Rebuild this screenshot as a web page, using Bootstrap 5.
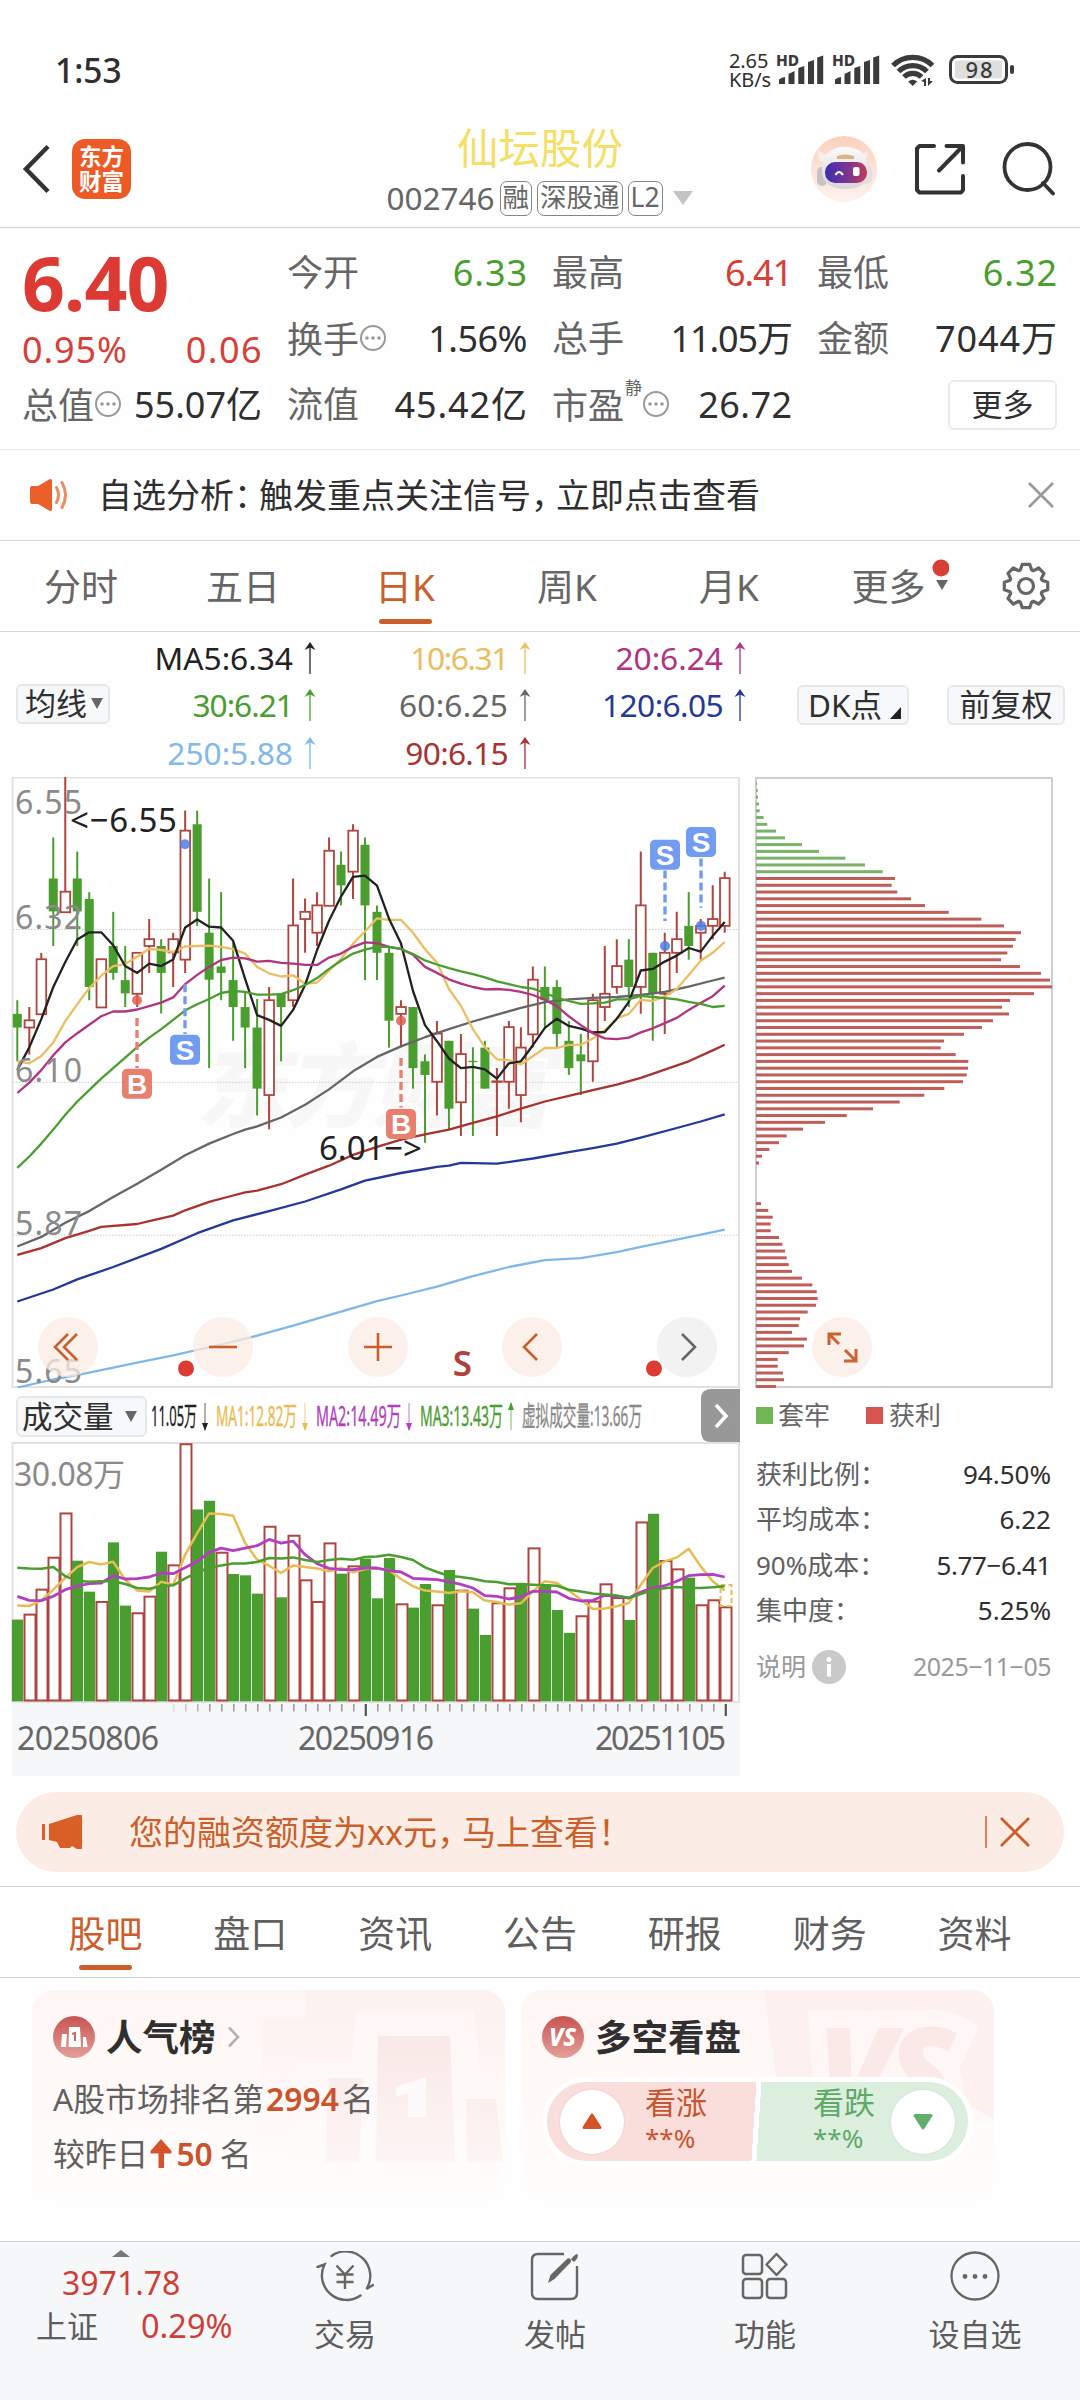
<!DOCTYPE html>
<html lang="zh-CN">
<head>
<meta charset="utf-8">
<meta name="viewport" content="width=device-width, initial-scale=1">
<title>仙坛股份 002746</title>
<link href="https://cdn.jsdelivr.net/npm/bootstrap@5.3.0/dist/css/bootstrap.min.css" rel="stylesheet">
<style>
:root{--up:#d83f39;--dn:#4a9d2f;--acc:#cb5f2b;--ln:#d9d9d9;--g6:#666}
body{font-family:"Noto Sans","Noto Sans CJK SC",sans-serif;color:#2f2f2f;background:#fefefe;width:1080px;height:2400px;overflow:hidden;line-height:1}
svg{display:block;flex:none}
svg text{font-family:"Noto Sans","Noto Sans CJK SC",sans-serif}
.statusbar{height:110px;padding:30px 46px 0 55px}
.clock{font-size:33.5px;font-weight:500;line-height:80px}
.speed{font-size:20px;line-height:19px;padding-top:21px;width:43px;margin-left:-1px;letter-spacing:-.1px}
.apphead{height:118px;border-bottom:1px solid #d0d0d0;padding:0 24px 0 22px}
.side-l{width:300px;padding-top:1px}.side-r{width:298px;gap:33px}
.logo-em{width:59px;height:60px;border-radius:13px;background:#ec5a26;color:#fff;font-size:22.5px;line-height:25px;font-weight:600;margin-left:22px}
.stock-name{font-size:41.5px;line-height:48px;color:#f4df67;margin-top:14px}
.stock-sub{font-size:31.500px;line-height:36px;color:var(--g6);gap:5px}
.tagbox{border:1.5px solid #858585;border-radius:7px;height:35px;line-height:31px;font-size:26.500px;padding:0 2px}
.quote{height:222px;border-bottom:1px solid #e8e8e8;padding:0 23px 0 22px;font-size:36px;gap:25px}
.qcol{flex:1 1 0;padding-top:12px}
.qline{height:66px;line-height:65px;white-space:nowrap}
.lbl{color:var(--g6);font-size:36px}
.upc{color:var(--up)}.dnc{color:var(--dn)}
.wide{letter-spacing:.9px;margin-right:-.9px}.tight{letter-spacing:-1.1px}
.bigprice{font-size:75px;font-weight:700;letter-spacing:-.8px;line-height:85px;height:88px;color:#dd3a33}
.morebtn{width:109px;height:50px;border:2px solid #ebebeb;border-radius:6px;font-size:31px;line-height:44px}
.notice{height:91px;border-bottom:1px solid #d4d4d4;padding:0 26px 0 28px;font-size:34px}
.pn{margin-right:-9px}
.ktabs{height:91px;border-bottom:1px solid #d4d4d4;font-size:37px;color:var(--g6)}
.ktab{width:162px;line-height:92px;position:relative;text-align:center}
.on{color:var(--acc)}
.on::after{content:"";position:absolute;left:50%;margin-left:-26px;width:53px;height:5.5px;border-radius:3px;background:var(--acc);bottom:7px}
.malegend{height:145px;font-size:31.7px}
.chipbtn{background:#f7f8fa;border:2px solid #e6e7ea;border-radius:6px;height:40px;line-height:35px;font-size:31px;white-space:nowrap}
.magrid{width:645px;margin-left:-9px;padding-top:3px}
.magrid>div{width:215px;height:46.5px;line-height:46px}
.tri-dn{width:0;height:0;border-left:6px solid transparent;border-right:6px solid transparent;border-top:11px solid #666}
.charts{height:1000px}
.leftcol{width:743px;padding-left:11px}
.rightcol{padding-left:12px;width:310px}
.volhead{height:54px;padding-left:5px}
.chipinfo{font-size:26px}
.legendrow{height:54px;line-height:54px;color:var(--g6)}
.sq{width:17px;height:17px;display:inline-block}
.inforow{height:45.4px;line-height:45.4px}
.banner{margin:15px 16px 0;height:80px;border-radius:40px;background:#fbede5;color:var(--acc);font-size:34px;padding:0 33px 0 26px}
.btabs{margin-top:14px;border-top:1px solid #d4d4d4;border-bottom:1px solid #d4d4d4;height:92px;padding:0 33px;font-size:37px;color:#5f5f5f}
.btab{flex:1;position:relative;text-align:center;line-height:93px}
.promos{padding:12px 32px 0;gap:16px;height:263px}
.promo{width:473px;height:211px;border-radius:22px;background:linear-gradient(180deg,#fef6f4,#fffdfc);position:relative;overflow:hidden;padding:26px 21px}
.promo>.deco{position:absolute;left:0;top:0}
.promo>.front{position:relative}
.ptitle{font-size:36.5px;font-weight:700;height:42px;line-height:42px;gap:11px}
.pline{font-size:31.8px;color:#606060;height:55px;line-height:55px;white-space:nowrap}
.hot{color:#ca532c;font-weight:600}
.duel{width:431px;height:89px;border-radius:45px;border:5px solid #fff;margin:19px 0 0 0;background:linear-gradient(93.6deg,#f9dedb 0 209px,#fff 209px 214px,#dceede 214px);padding:0 12px 0 13px}
.rnd{width:64px;height:64px;border-radius:50%;background:#fff;box-shadow:0 0 3px rgba(0,0,0,.08)}
.duel .t1{font-size:31px;line-height:38px;margin-top:-5px}.duel .t2{font-size:26px;line-height:34px}
.tabbar{height:160px;border-top:1px solid #cfd2d4;background:#f6f7f9;color:#5d5d5d;font-size:31px}
.tabbar .cell{width:210px;padding-top:9px;text-align:center}
.cell div{line-height:42px;margin-top:10px}
.idx{width:240px}
</style>
</head>
<body>
<header>
<div class="statusbar d-flex justify-content-between">
  <div class="clock">1:53</div>
  <div class="d-flex">
    <div class="speed">2.65<br>KB/s</div>
    <svg width="262" height="50" viewBox="772 50 262 50" style="margin-top:20px" fill="#3b3b3b">
      <g id="sig"><text x="776" y="66" font-size="15.5" font-weight="800" textLength="23">HD</text>
      <path d="M779 84v-4.500q3-2.500 6-2.500v7zM788.500 84V74l6-3v13zM798.300 84V68l6-2v18zM808 84V62l6-2v24zM817.200 84V57.500l6-2V84z"/></g>
      <use href="#sig" x="56"/>
      <g fill="none" stroke="#3b3b3b" stroke-width="5.200"><path d="M893 65.500A28 28 0 0 1 932.500 65.500"/><path d="M898.500 71.500A20 20 0 0 1 927 71.500"/><path d="M904 77A12.500 12.500 0 0 1 921.500 77"/></g>
      <path d="M912.700 86l-4.500-4.500q4.500-3.500 9 0zM921 81l5-3v8h-2v-4zM933 81l-5 5v-8h2v3z"/>
      <rect x="950.500" y="56.500" width="56" height="26" rx="7" fill="none" stroke="#3b3b3b" stroke-width="3"/>
      <rect x="955" y="60.500" width="47" height="18" rx="3" fill="#dedede"/>
      <text x="965.500" y="77.500" font-size="22" font-weight="500" textLength="27">98</text>
      <rect x="1010" y="65" width="4" height="9" rx="2"/>
    </svg>
  </div>
</div>
<div class="apphead d-flex justify-content-between">
  <div class="side-l d-flex align-items-center">
    <svg width="28" height="52" viewBox="0 0 28 52"><path d="M26 3.500 4 26 26 48.500" fill="none" stroke="#333" stroke-width="4.500"/></svg>
    <div class="logo-em d-flex flex-column align-items-center justify-content-center"><span>东方</span><span>财富</span></div>
  </div>
  <div class="text-center">
    <div class="stock-name">仙坛股份</div>
    <div class="stock-sub d-flex align-items-center justify-content-center mt-2"><span>002746</span><span class="tagbox">融</span><span class="tagbox">深股通</span><span class="tagbox">L2</span>
      <svg width="22" height="14" viewBox="0 0 22 14" class="ms-1"><path d="M1 0h20L11 14z" fill="#c4c4c4"/></svg></div>
  </div>
  <div class="side-r d-flex align-items-center justify-content-end">
    <svg width="68" height="68" viewBox="0 0 68 68" class="me-1">
      <defs><linearGradient id="rb" x2="0" y2="1"><stop stop-color="#fad1bd"/><stop offset="1" stop-color="#fdf3ef"/></linearGradient><linearGradient id="vs"><stop stop-color="#3b2fb0"/><stop offset=".55" stop-color="#7c3590"/><stop offset="1" stop-color="#c43a55"/></linearGradient><linearGradient id="hd" x2="0" y2="1"><stop stop-color="#fcfafa"/><stop offset="1" stop-color="#dad4d9"/></linearGradient></defs>
      <circle cx="34" cy="34" r="33" fill="url(#rb)"/>
      <path d="M9 14q2 7 11 5L14 28Q6 24 9 14zM57 14q-2 7-10 5l5 8q7-3 5-13z" fill="#f3efed"/>
      <rect x="7" y="32" width="10" height="19" rx="5" fill="#c6c2c6"/><rect x="51" y="31" width="11" height="18" rx="5" fill="#e3dfe2"/>
      <path d="M12 34Q13 12 35 12T58 34Q60 53 37 54 11 54 12 34z" fill="url(#hd)"/>
      <path d="M27 21q8-3 17 0v3H27z" fill="#ddb184"/>
      <rect x="15" y="27" width="42" height="21" rx="10" fill="url(#vs)"/>
      <path d="M25.500 40q3.500-6 7.500 0" fill="none" stroke="#fff" stroke-width="2.200"/><rect x="43" y="32" width="6.500" height="9" rx="2" fill="#fff"/>
    </svg>
    <svg width="50" height="52" viewBox="912 143 50 52" fill="none" stroke="#333" stroke-width="4" stroke-linecap="round" stroke-linejoin="round"><path d="M931 146h-14.500l-2.500 2.500v41.500l2.500 2.500h41.500l2-2.500v-14M943.500 146H960v16.500M959 147l-23 23.500"/></svg>
    <svg width="54" height="54" viewBox="1001 141 54 54" fill="none" stroke="#333" stroke-width="3.800" stroke-linecap="round" class="ms-1"><circle cx="1026.500" cy="166" r="23"/><path d="M1042 182l10 10.500"/></svg>
  </div>
</div>
</header>

<section class="quote d-flex">
  <div class="qcol">
    <div class="bigprice">6.40</div>
    <div class="d-flex justify-content-between upc" style="height:44px;line-height:44px"><span class="wide">0.95%</span><span class="wide" style="letter-spacing:1.4px">0.06</span></div>
    <div class="qline d-flex justify-content-between"><span class="lbl d-flex align-items-center">总值<svg class="dots" width="28" height="28" viewBox="0 0 28 28"><use href="#dd"/></svg></span><span>55.07亿</span></div>
  </div>
  <div class="qcol">
    <div class="qline d-flex justify-content-between"><span class="lbl">今开</span><span class="dnc wide">6.33</span></div>
    <div class="qline d-flex justify-content-between"><span class="lbl d-flex align-items-center">换手<svg width="28" height="28" viewBox="0 0 28 28"><g id="dd" fill="#999"><circle cx="14" cy="13" r="12" fill="none" stroke="#999" stroke-width="2"/><circle cx="8" cy="13" r="1.800"/><circle cx="14" cy="13" r="1.800"/><circle cx="20" cy="13" r="1.800"/></g></svg></span><span style="letter-spacing:-.5px">1.56%</span></div>
    <div class="qline d-flex justify-content-between"><span class="lbl">流值</span><span class="wide">45.42亿</span></div>
  </div>
  <div class="qcol">
    <div class="qline d-flex justify-content-between"><span class="lbl">最高</span><span class="upc tight">6.41</span></div>
    <div class="qline d-flex justify-content-between"><span class="lbl">总手</span><span class="tight">11.05万</span></div>
    <div class="qline d-flex justify-content-between"><span class="lbl d-flex align-items-center">市盈<span style="font-size:17px;line-height:20px;margin:-34px 0 0 1px">静</span><svg width="28" height="28" viewBox="0 0 28 28"><use href="#dd"/></svg></span><span class="wide" style="letter-spacing:.4px;margin-right:-.4px">26.72</span></div>
  </div>
  <div class="qcol">
    <div class="qline d-flex justify-content-between"><span class="lbl">最低</span><span class="dnc wide">6.32</span></div>
    <div class="qline d-flex justify-content-between"><span class="lbl">金额</span><span class="wide">7044万</span></div>
    <div class="qline d-flex justify-content-end align-items-center"><div class="morebtn text-center">更多</div></div>
  </div>
</section>

<section class="notice d-flex align-items-center">
  <svg width="42" height="34" viewBox="0 0 42 34"><path d="M2 10q0-2 2-2h6L21 1.500q3-1.500 3 1.500v28q0 3-3 1.500L10 26H4q-2 0-2-2z" fill="#ea5f2a"/><path d="M28.500 9.500q4 7.500 0 15M34 4.500q7 12.500 0 25" fill="none" stroke="#ef8a61" stroke-width="3" stroke-linecap="round"/></svg>
  <div class="flex-fill" style="padding-left:28px">自选分析<span class="pn">：</span>触发重点关注信号<span class="pn">，</span>立即点击查看</div>
  <svg width="26" height="26" viewBox="0 0 26 26"><path d="M1 1l24 24M25 1 1 25" stroke="#999" stroke-width="2.600"/></svg>
</section>

<nav class="ktabs d-flex">
  <div class="ktab">分时</div><div class="ktab">五日</div><div class="ktab on">日K</div><div class="ktab">周K</div><div class="ktab">月K</div>
  <div class="ktab d-flex justify-content-center"><span class="ms-1">更多</span><svg width="18" height="60" viewBox="0 0 18 60" style="margin:10px -14px 0 5px"><circle cx="10" cy="17" r="8.500" fill="var(--up)"/><path d="M5 29h12l-6 10z" fill="#666"/></svg></div>
  <div class="flex-fill d-flex align-items-center justify-content-center">
    <svg width="48" height="48" viewBox="-24 -24 48 48" fill="none" stroke="#666" stroke-width="3.200" stroke-linejoin="round"><path id="gear" d=""/><circle r="7.500"/></svg>
  </div>
</nav>

<section class="malegend d-flex">
  <div class="d-flex align-items-center" style="padding:0 0 2px 16px"><div class="chipbtn d-flex align-items-center" style="width:94px;padding-left:7px">均线<span class="tri-dn ms-1"></span></div></div>
  <div class="magrid d-flex flex-wrap" id="ma"></div>
  <div class="d-flex align-items-center flex-fill justify-content-between" style="padding:1px 15px 0 51px">
    <div class="chipbtn d-flex" style="width:112px;padding-left:9px;font-size:31.500px">DK点<svg width="11" height="12" viewBox="0 0 11 12" class="align-self-end mb-1 ms-2"><path d="M11 0v12H0z" fill="#222"/></svg></div>
    <div class="chipbtn text-center" style="width:118px">前复权</div>
  </div>
</section>

<section class="charts d-flex">
  <div class="leftcol">
    <svg id="kchart" width="729" height="611" viewBox="11 777 729 611"></svg>
    <div class="volhead d-flex">
      <div class="chipbtn d-flex align-items-center mt-2" style="width:131px;height:41px;padding-left:4px;font-size:30.500px">成交量<span class="tri-dn" style="margin-left:11px"></span></div>
      <svg width="593" height="54" viewBox="147 1388 593 54" id="volinfo"></svg>
    </div>
    <svg id="vchart" width="729" height="334" viewBox="11 1442 729 334"></svg>
  </div>
  <div class="rightcol">
    <svg id="chips" width="300" height="611" viewBox="755 777 300 611"></svg>
    <div class="chipinfo" style="padding:0 1px;width:297px">
      <div class="legendrow d-flex align-items-center"><span class="sq" style="background:#72b554"></span><span style="margin:0 36px 0 5px">套牢</span><span class="sq" style="background:#d6534f"></span><span style="margin-left:6px">获利</span></div>
      <div style="height:10px"></div>
      <div class="inforow d-flex justify-content-between"><span style="color:#606060">获利比例：</span><span>94.50%</span></div>
      <div class="inforow d-flex justify-content-between"><span style="color:#606060">平均成本：</span><span>6.22</span></div>
      <div class="inforow d-flex justify-content-between"><span style="color:#606060">90%成本：</span><span style="letter-spacing:-.4px">5.77−6.41</span></div>
      <div class="inforow d-flex justify-content-between"><span style="color:#606060">集中度：</span><span>5.25%</span></div>
      <div class="d-flex justify-content-between align-items-center" style="height:66px;color:#999;font-size:25px"><span class="d-flex align-items-center">说明<svg width="34" height="34" viewBox="0 0 34 34" style="margin-left:6px"><circle cx="17" cy="17" r="17" fill="#c9c9c9"/><circle cx="17" cy="9.500" r="2.500" fill="#fff"/><path d="M17 14v12.500" stroke="#fff" stroke-width="4"/></svg></span><span style="letter-spacing:-.5px">2025−11−05</span></div>
    </div>
  </div>
</section>

<section class="banner d-flex align-items-center">
  <svg width="42" height="36" viewBox="0 0 42 36" fill="#d95f27"><path d="M0 10h3v16H0zM7 10 35 1h5v34h-5l-5-3-2 2h-10l-3-6-8-2z"/></svg>
  <div class="flex-fill" style="padding-left:45px">您的融资额度为xx元<span class="pn">，</span>马上查看！</div>
  <svg width="46" height="34" viewBox="0 0 46 34" stroke="#cb5f2b" fill="none"><path d="M1 1v32" stroke-width="1.500"/><path d="M16 3l28 28M44 3 16 31" stroke-width="2.800"/></svg>
</section>

<nav class="btabs d-flex">
  <div class="btab on">股吧</div><div class="btab">盘口</div><div class="btab">资讯</div><div class="btab">公告</div><div class="btab">研报</div><div class="btab">财务</div><div class="btab">资料</div>
</nav>

<section class="promos d-flex">
  <div class="promo">
    <svg class="deco" width="473" height="211" viewBox="0 0 473 211">
      <defs><linearGradient id="fd" x2="0" y2="1"><stop stop-color="#f8e5e3"/><stop offset="1" stop-color="#fcf4f2"/></linearGradient><linearGradient id="fe" x2="0" y2="1"><stop stop-color="#fcf1ef"/><stop offset="1" stop-color="#fffcfa"/></linearGradient></defs>
      <path d="M274 0h199v172H456L442 21H324L320 72H264L256 172H222L232 27h42z" fill="url(#fe)"/>
      <path d="M346 46h72l5 126h-79zM297 88h34l-4 84h-34zM434 109h30l7 63h-36z" fill="url(#fd)" opacity=".8"/>
      <path d="M364 97l30-10v40h-18V103l-12 3z" fill="#fffafa"/>
    </svg>
    <div class="front">
      <div class="ptitle d-flex align-items-center">
        <svg width="42" height="42" viewBox="0 0 42 42"><defs><linearGradient id="ig" x2="0" y2="1"><stop stop-color="#c85350"/><stop offset="1" stop-color="#e4a09b"/></linearGradient></defs><circle cx="21" cy="21" r="21" fill="url(#ig)"/><path d="M9 18h5l-1 13H8zM16 11h11l1 20H15.500zM30 21h3l1.500 10H30z" fill="#fff"/><path d="M19 18l3-1v8" fill="none" stroke="#cf6a66" stroke-width="2"/></svg>
        <span>人气榜</span>
        <svg width="13" height="22" viewBox="0 0 13 22"><path d="M2 1.500l9 9.500-9 9.500" fill="none" stroke="#b2b2b2" stroke-width="2.600"/></svg>
      </div>
      <div class="pline" style="margin-top:13px">A股市场排名第<span class="hot" style="margin:0 3px 0 2px">2994</span>名</div>
      <div class="pline d-flex align-items-center">较昨日<svg width="22" height="30" viewBox="0 0 22 30" style="margin:0 4px 0 2px"><path d="M11 0 21.500 12v2.500H14V29H8.500V14.500H.5V12z" fill="#d4532b"/></svg><span class="hot" style="margin-right:7px">50</span>名</div>
    </div>
  </div>
  <div class="promo">
    <svg class="deco" width="473" height="211" viewBox="0 0 473 211">
      <path d="M243 0H473V130L440 110 256 95z" fill="#fcf1ef"/>
      <text x="296" y="128" font-size="126" font-weight="900" font-style="italic" letter-spacing="-8" fill="#fae9e7" stroke="#fef7f5" stroke-width="34" paint-order="stroke">VS</text>
    </svg>
    <div class="front">
      <div class="ptitle d-flex align-items-center">
        <svg width="42" height="42" viewBox="0 0 42 42"><circle cx="21" cy="21" r="21" fill="url(#ig)"/><text x="7" y="30" font-size="25" font-weight="800" font-style="italic" fill="#fff" textLength="27" lengthAdjust="spacingAndGlyphs">VS</text></svg>
        <span>多空看盘</span>
      </div>
      <div class="duel d-flex align-items-center">
        <div class="rnd d-flex align-items-center justify-content-center"><svg width="20" height="17" viewBox="0 0 20 17"><path d="M10 2 18 14.500H2z" fill="#d4532b" stroke="#d4532b" stroke-width="3" stroke-linejoin="round"/></svg></div>
        <div style="color:#c95430;margin-left:21px;width:168px"><div class="t1">看涨</div><div class="t2">**%</div></div>
        <div style="color:#5fa968;width:78px"><div class="t1">看跌</div><div class="t2">**%</div></div>
        <div class="rnd d-flex align-items-center justify-content-center"><svg width="20" height="17" viewBox="0 0 20 17"><path d="M10 15 18 2.500H2z" fill="#62ae6b" stroke="#62ae6b" stroke-width="3" stroke-linejoin="round"/></svg></div>
      </div>
    </div>
  </div>
</section>

<nav class="tabbar d-flex">
  <div class="idx" style="padding-top:8px">
    <svg width="18" height="7" viewBox="0 0 18 7" style="margin-left:112px"><path d="M0 7 9 0l9 7z" fill="#777"/></svg>
    <div style="margin:5px 0 0 62px;font-size:32px;line-height:42px;color:#cf3f3a">3971.78</div>
    <div class="d-flex" style="padding-left:36px;line-height:44px"><span>上证</span><span style="color:#cf3f3a;margin-left:43px;font-size:32.500px">0.29%</span></div>
  </div>
  <div class="cell"><svg class="mx-auto" width="58" height="52" viewBox="317 2251 58 52" fill="none" stroke="#666" stroke-width="2.400" stroke-linecap="round"><path d="M332.500 2256A24.500 24.500 0 0 1 367.500 2289l6.500-4M361.500 2295.500A24.500 24.500 0 0 1 325.500 2264.500l-7 2.500"/><path d="M337.500 2265.500l8.500 9 8.500-9M346 2274.500V2289M337.500 2274.500h17M337.500 2282h17" stroke-linecap="butt"/></svg><div>交易</div></div>
  <div class="cell"><svg class="mx-auto" width="50" height="52" viewBox="531 2251 50 52" fill="none" stroke="#666" stroke-width="2.400"><path d="M565 2254H539q-6 0-6 6v33q0 6 6 6h33q6 0 6-6v-27"/><path d="M549 2283l2.500-8 17-16.500q3.500-1.500 3.500 3.500l-16.500 17z" fill="#666" stroke="none"/><path d="M572 2259.500q3-5 6.500-5.500 1.500 3.500-3.500 8z" fill="#666" stroke="none"/></svg><div>发帖</div></div>
  <div class="cell"><svg class="mx-auto" width="50" height="52" viewBox="0 1 50 52" fill="none" stroke="#666" stroke-width="2.500" stroke-linejoin="round"><rect x="3" y="5" width="19" height="19" rx="3"/><rect x="3" y="29" width="19" height="19" rx="3"/><rect x="27" y="29" width="19" height="19" rx="3"/><path d="M36.500 4 46.500 14.500 36.500 25 26.500 14.500z"/></svg><div>功能</div></div>
  <div class="cell"><svg class="mx-auto" width="52" height="52" viewBox="0 1 52 52"><circle cx="26" cy="26" r="23.500" fill="none" stroke="#666" stroke-width="2.300"/><g fill="#666"><circle cx="16" cy="26.500" r="2.400"/><circle cx="26" cy="26.500" r="2.400"/><circle cx="36" cy="26.500" r="2.400"/></g></svg><div>设自选</div></div>
</nav>

<script src="https://cdn.jsdelivr.net/npm/bootstrap@5.3.0/dist/js/bootstrap.bundle.min.js"></script>
<script>
const RED='#b0453f', GRN='#4a9d2f';
const $=id=>document.getElementById(id);

// settings gear outline: eight teeth
(function(){let p=[];for(let k=0;k<8;k++){const a=k*Math.PI/4-Math.PI/2;[[-.34,17],[-.17,22],[.17,22],[.34,17]].forEach(([d,r])=>p.push((r*Math.cos(a+d)).toFixed(1)+' '+(r*Math.sin(a+d)).toFixed(1)));}
$('gear').setAttribute('d','M'+p.join('L')+'Z');})();

// moving average legend: text, colour, tracking
const up=c=>`<svg width="12" height="32" viewBox="0 0 12 32" style="margin:7px 0 0 11px"><path d="M6 1v31" stroke="${c}" stroke-width="1.300" fill="none"/><path d="M6 0 11.500 8 6 5.500 .5 8z" fill="${c}"/></svg>`;
$('ma').innerHTML=[['MA5:6.34','#222',0],['10:6.31','#e9bd60',-1.4],['20:6.24','#b0347f',0],['30:6.21','#4a9d2f',-1],['60:6.25','#666',.2],['120:6.05','#26379a',-.6],['250:5.88','#82b9e8',0],['90:6.15','#a83230',-.7]]
 .map(([t,c,s])=>`<div class="d-flex justify-content-end" style="color:${c};letter-spacing:${s}px">${t}${up(c)}</div>`).join('');

// candles: kind, high, body top, body bottom, low
const K=`G573,607,641,725 R590,623,641,708 R455,471,608,608 G168,270,352,438 R17,303,354,354 G203,270,352,438 G304,321,540,573 R471,471,591,591 G353,438,505,522 G438,523,556,590 R455,455,557,590 R371,421,438,505 G421,438,505,606 R405,421,454,540 R101,151,472,505 G101,135,353,388 G270,405,522,742 G304,489,505,573 G430,523,590,674 G555,590,641,742 G570,641,793,860 R540,573,809,894 G556,556,590,725 R270,387,573,590 R320,353,371,455 R304,337,405,438 R168,201,338,338 G203,236,287,337 R135,151,253,321 G168,186,337,523 G337,353,455,523 G440,455,624,691 R573,590,607,690 G590,590,742,793 G708,725,759,928 R625,656,776,860 G674,674,843,894 R657,707,827,911 G690,724,727,911 G674,691,793,793 R742,775,776,911 R625,640,776,843 R640,691,809,877 R489,522,658,690 G489,540,573,640 G523,540,657,690 G625,674,742,759 G657,708,725,809 R557,573,725,776 R438,557,590,625 R421,488,540,557 G421,472,540,590 R203,337,540,607 G455,455,557,674 R405,455,557,657 R353,421,455,505 G304,388,438,472 R371,388,405,472 R287,371,388,421 R253,269,388,405`.split(' ');
const X=i=>17.3+11.99*i, Y=v=>770+v/2.489;
const line=(pts,c,fy,w=2.3)=>`<polyline fill="none" stroke="${c}" stroke-width="${w}" stroke-linejoin="round" points="${pts.map(([i,v])=>X(i).toFixed(1)+','+fy(v).toFixed(1)).join(' ')}"/>`;
const seq=s=>s.split(',').map((v,i)=>[i,+v]);
const prs=s=>s.split(' ').map(p=>p.split(':').map(Number));
let h='';
h+=`<text x="196" y="1120" font-size="92" font-weight="800" font-style="italic" fill="#f7f7f7" textLength="356">东方财富</text>`;
h+=`<rect x="12.500" y="777.500" width="726.500" height="609.500" fill="none" stroke="#e2e2e2" stroke-width="2"/>`;
[929.5,1082.3,1235.2].forEach(y=>h+=`<path d="M13 ${y}H739" stroke="#ccc" stroke-width="1" stroke-dasharray="1.500 1.500"/>`);
K.forEach((s,i)=>{const g=s[0]=='G',[a,b,c,d]=s.slice(1).split(',').map(v=>Y(+v)),x=X(i),col=g?GRN:RED;
 if(g) h+=`<path d="M${x} ${a}V${d}" stroke="${col}" stroke-width="2"/><rect x="${x-4.5}" y="${b}" width="9" height="${c-b}" fill="${col}"/>`;
 else h+=`<path d="M${x} ${a}V${b}M${x} ${c}V${d}" stroke="${col}" stroke-width="2"/><rect x="${x-4.7}" y="${b}" width="9.600" height="${Math.max(c-b,.5)}" fill="#fff" stroke="${col}" stroke-width="1.800"/>`;});
h+=line(prs('0:1537 3:1517 6:1500 10:1475 13:1457 17:1430 20:1408 23:1383 26:1357 30:1322 32:1308 35:1286 38:1260 41:1237 44:1220 47:1215 50:1200 52:1187 55:1169 59:1144'),'#7fb8e8',Y);
h+=line(prs('0:1323 3:1293 5:1268 8:1237 12:1192 15:1153 18:1121 21:1098 24:1074 27:1044 29:1022 32:1003 34:993 35:988 36:985 37:978 40:980 43:967 46:951 48:941 50:930 52:915 55:891 57:875 59:857'),'#26379a',Y);
h+=line(prs('0:1207 2:1190 4:1165 6:1147 7:1137 10:1130 11:1123 13:1109 14:1096 16:1075 18:1059 19:1051 20:1047 22:1031 24:1007 26:985 28:958 30:938 32:920 34:907 36:895 38:878 40:862 42:843 44:825 46:811 48:797 50:783 52:766 54:746 56:725 58:698 59:684'),'#a83230',Y);
h+=line(prs('0:1186 2:1162 4:1127 6:1098 8:1063 10:1030 12:995 14:959 16:930 18:906 19:895 20:887 22:865 24:833 26:795 28:750 30:714 32:688 34:665 36:645 38:626 40:609 42:592 44:578 46:571 48:567 50:565 52:560 54:552 56:539 58:524 59:517'),'#666',Y);
h+=line(seq('725,730,712,678,625,583,543,512,488,483,465,445,448,453,439,438,437,440,446,457,490,506,514,511,532,529,500,470,432,402,369,373,373,405,446,480,545,587,645,690,720,722,733,712,692,692,684,684,668,648,618,607,572,575,564,545,510,475,455,428'),'#ebbf61',Y);
h+=line(seq('747,690,620,540,478,422,404,404,436,488,505,482,488,472,392,372,390,392,425,520,610,622,637,597,535,448,375,315,266,263,288,370,432,550,635,675,718,742,739,745,768,730,725,685,642,619,637,644,653,652,619,577,499,495,477,462,443,452,413,378'),'#222',Y);
h+=line(seq('804,778,747,710,678,655,634,613,601,601,596,588,579,566,533,510,490,473,467,469,477,475,480,482,485,485,467,457,440,429,431,440,445,460,490,505,521,532,540,546,545,547,552,560,572,588,613,635,655,668,670,666,653,643,630,617,597,580,563,537'),'#b0347f',Y);
h+=line(seq('990,962,930,895,858,825,797,768,742,716,690,666,645,622,598,583,570,555,550,552,559,559,558,548,535,518,495,475,457,447,440,440,446,458,474,484,493,501,508,516,526,533,540,544,555,567,575,582,581,579,571,571,562,565,568,571,577,582,590,587'),'#4a9d2f',Y);
// trade marks: letter, x, tag y, dash from/to, dot y
[['B',137,781,617,742,573],['S',185,696,533,657,185],['B',401,881,717,840,624],['S',665,211,250,376,438],['S',701,179,220,343,388]].forEach(([t,x,ty,a,b,d])=>{
 const c=t=='B'?'#e9806f':'#729cf0';
 h+=`<path d="M${x} ${Y(a)}V${Y(b)}" stroke="${c}" stroke-width="3.400" stroke-dasharray="8 4"/><circle cx="${x}" cy="${Y(d)}" r="5" fill="${t=='B'?'#e25d50':'#4d7ee8'}" opacity=".85"/><rect x="${x-15}" y="${Y(ty)-15}" width="30" height="30" rx="5" fill="${c}"/><text x="${x}" y="${Y(ty)+10}" text-anchor="middle" font-size="28" font-weight="700" fill="#fff" style="font-family:'Liberation Sans',sans-serif">${t}</text>`;});
[['6.55',814],['6.32',929],['6.10',1082],['5.87',1235],['5.65',1383]].forEach(([t,y])=>h+=`<text x="15" y="${y-.5}" font-size="32" fill="#8a8a8a" textLength="67">${t}</text>`);
h+=`<text x="70" y="831.500" font-size="33" fill="#222" textLength="107">&lt;−6.55</text><text x="319" y="1160" font-size="33" fill="#222" textLength="103">6.01−&gt;</text>`;
[68,223,378,532,687].forEach((x,i)=>{const c=i==4?'#666':'#cb5f2b';h+=`<circle cx="${x}" cy="1347" r="30" fill="${i==4?'#ededed':'#faece3'}" opacity=".75"/><path fill="none" stroke="${c}" stroke-width="2.600" d="${[`M${x} 1334l-13 13 13 13M${x+9} 1334l-13 13 13 13`,`M${x-14} 1347h28`,`M${x-14} 1347h28M${x} 1333v28`,`M${x+5} 1334l-13 13 13 13`,`M${x-5} 1334l13 13-13 13`][i]}"/>`;});
[186,654].forEach(x=>h+=`<circle cx="${x}" cy="1368.500" r="8" fill="#dc3a33"/>`);
h+=`<text x="462.500" y="1376" text-anchor="middle" font-size="35" font-weight="600" fill="#b0423d">S</text>`;
$('kchart').innerHTML=h;

// volume header, condensed figures
$('volinfo').innerHTML=[['11.05万',151,46,'#222',205,0],['MA1:12.82万',216,81,'#e6bd52',305,0],['MA2:14.49万',316,85,'#b13fc0',409,0],['MA3:13.43万',420,83,'#4a9d2f',511,1],['虚拟成交量:13.66万',522,120,'#888',0,0]]
 .map(([t,x,w,c,ax,u])=>`<text x="${x}" y="1425.500" font-size="27.500" fill="${c}" stroke="${c}" stroke-width=".35" textLength="${w}" lengthAdjust="spacingAndGlyphs">${t}</text>`+(ax?`<path d="M${ax} 1403v27" stroke="${c}" stroke-opacity=".7" stroke-width="1"/><path d="${u?`M${ax-3} 1410l3-8 3 8z`:`M${ax-3} 1423l3 8 3-8z`}" fill="${c}"/>`:'')).join('')
 +'<path d="M740 1389H711q-10 0-10 10v33q0 10 10 10h29z" fill="#989898"/><path d="M716 1405l10 11-10 11" fill="none" stroke="#fff" stroke-width="3.500"/>';

// volume bars
const V='G720 R702 R627 R531 R398 G543 G636 R664 G488 G678 R698 R648 G516 R554 R190 G389 G363 R516 G583 G587 G642 R438 G653 R465 R599 R664 R488 G582 R557 G537 G656 G535 R671 G684 G613 R674 G571 R630 G687 G766 R668 R623 G612 R503 G614 G691 G760 R707 R663 R611 R652 G721 R425 G402 R541 R566 G594 R674 R659 R680'.split(' ');
const VY=v=>1380+v/3.005;
let v=`<rect x="12.500" y="1443" width="726.500" height="259" fill="none" stroke="#e2e2e2" stroke-width="2"/><rect x="12" y="1703" width="728" height="73" fill="#f6f7f9"/>`;
v+=`<text x="14" y="1486" font-size="32" fill="#8a8a8a" textLength="111">30.08万</text>`;
V.forEach((s,i)=>{const x=17.5+12*i,y=VY(+s.slice(1)),g=s[0]=='G';
 v+=g?`<rect x="${x-5.6}" y="${y}" width="11.200" height="${1701.3-y}" fill="${GRN}"/>`:`<rect x="${x-5}" y="${y+1}" width="11" height="${1699.5-y}" fill="#fff" stroke="${RED}" stroke-width="2"/>`;
 if(i>12) v+=`<path d="M${x+.3} 1704v${i==29||i==59?12:7.5}" stroke="${i==29||i==59?'#555':'#999'}" stroke-width="${i==29||i==59?2.2:1.5}" opacity="${i<16?(i-12)*.25:1}"/>`;});
v+=`<rect x="720.500" y="1585" width="11" height="21" fill="#fff" stroke="#e6bd52" stroke-width="2" stroke-dasharray="5 3"/>`;
v+=line(seq('678,679,662,630,595,562,547,554,546,600,633,636,606,615,525,460,401,403,408,490,540,558,580,557,562,566,575,565,578,568,566,572,598,620,633,636,640,635,638,663,667,675,671,635,605,610,633,660,688,687,680,670,615,565,545,533,507,560,605,633'),'#e6bd52',VY,2.5);
v+=line(seq('650,662,663,650,630,619,612,610,588,598,597,592,580,582,563,545,518,505,513,505,498,479,490,484,525,552,566,570,570,565,565,573,577,596,598,600,606,614,625,648,650,658,652,635,635,637,656,664,662,647,650,655,637,625,618,605,588,585,584,592'),'#b13fc0',VY,2.8);
v+=line(seq('564,566,567,562,590,603,606,605,605,613,625,627,620,617,596,578,565,557,551,551,547,535,536,533,541,547,541,537,540,532,530,525,532,541,563,577,588,592,597,605,607,614,613,615,617,618,630,636,642,645,648,655,643,630,626,622,624,625,623,620'),'#4a9d2f',VY,2.5);
[['20250806',17,142],['20250916',298,136],['20251105',595,131]].forEach(([t,x,w])=>v+=`<text x="${x}" y="1749.500" font-size="32" fill="#666" textLength="${w}">${t}</text>`);
$('vchart').innerHTML=v;

// chip distribution bars
const C='51,53,54,57,59,71,82,108,135,186,237,316,375,428,465,455,472,513,555,626,724,792,843,827,819,802,783,840,903,930,936,882,810,786,807,759,726,672,612,602,647,685,684,680,669,613,553,479,399,320,255,189,140,117,88,66,57,0,0,0,0,0,63,85,98,92,92,117,127,135,140,146,156,186,217,230,233,228,203,180,176,156,201,192,146,113,113,129,132,108'.split(',');
let c='<rect x="756" y="778" width="296" height="609" fill="none" stroke="#c9c9c9" stroke-width="1.800"/>';
C.forEach((e,i)=>{if(+e)c+=`<rect x="756" y="${(Y(34+16.86*i)-1.5).toFixed(2)}" width="${((e-48)/3).toFixed(1)}" height="3" fill="${i<14?'#79b268':'#bf5d59'}"/>`;});
c+='<circle cx="842" cy="1347" r="30" fill="#fbf1ea"/><path d="M839 1344l-10-10M829 1345v-11h12M845 1350l11 11M856 1349v12h-12" fill="none" stroke="#cb6230" stroke-width="3"/>';
$('chips').innerHTML=c;
</script>
</body>
</html>
